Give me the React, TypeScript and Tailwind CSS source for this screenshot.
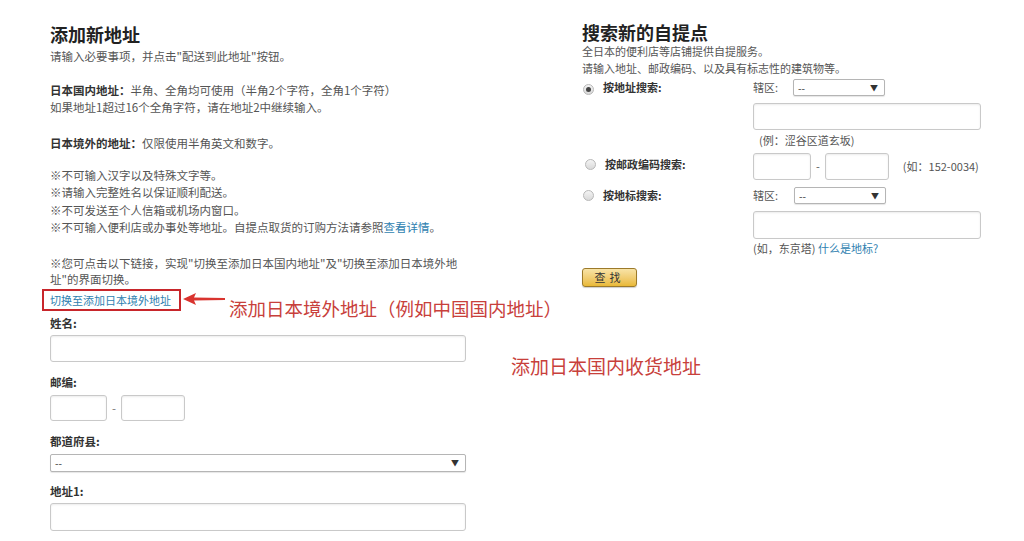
import React from "react";

const font = { fontFamily: '"Noto Sans CJK SC", "Noto Sans", sans-serif' };

function TextInput({ w }: { w: string }) {
  return (
    <div
      className={`${w} rounded-[3px] border border-[#c9c9c9] bg-white shadow-[inset_0_1px_2px_rgba(0,0,0,0.08)]`}
    />
  );
}

function Select({ w, h }: { w: string; h: string }) {
  return (
    <div
      className={`${w} ${h} flex items-center justify-between rounded-[2px] border border-[#b5b5b5] bg-white pl-[4px] pr-[6px] text-[10px] leading-none text-[#333] shadow-[0_1px_1px_rgba(0,0,0,0.1)]`}
    >
      <span>--</span>
      <span className="text-[8px]">▼</span>
    </div>
  );
}

function Radio({ checked }: { checked?: boolean }) {
  return (
    <div className="flex h-[11px] w-[11px] items-center justify-center rounded-full border border-[#b8b8b8] bg-gradient-to-b from-[#f4f4f4] to-[#d9d9d9]">
      {checked && <div className="h-[5px] w-[5px] rounded-full bg-[#444]" />}
    </div>
  );
}

export default function App() {
  return (
    <div
      style={font}
      className="relative h-[541px] w-[1024px] overflow-hidden bg-white text-[11px] text-[#555]"
    >
      <div className="flex pl-[50px]">
        {/* Left column */}
        <div className="w-[416px] pt-[22px] text-[11.5px]">
          <h1 className="text-[18px] font-bold leading-[24px] text-[#222]">添加新地址</h1>
          <p className="mt-[2px] leading-[17px]">请输入必要事项，并点击"配送到此地址"按钮。</p>
          <p className="mt-[17px] leading-[17px]">
            <span className="font-bold text-[#333]">日本国内地址：</span>半角、全角均可使用（半角2个字符，全角1个字符）
            <br />
            如果地址1超过16个全角字符，请在地址2中继续输入。
          </p>
          <p className="mt-[19px] leading-[17px]">
            <span className="font-bold text-[#333]">日本境外的地址：</span>仅限使用半角英文和数字。
          </p>
          <div className="mt-[15px] leading-[17.3px]">
            <p>※不可输入汉字以及特殊文字等。</p>
            <p>※请输入完整姓名以保证顺利配送。</p>
            <p>※不可发送至个人信箱或机场内窗口。</p>
            <p>
              ※不可输入便利店或办事处等地址。自提点取货的订购方法请参照
              <span className="text-[#2f7fb0]">查看详情</span>。
            </p>
          </div>
          <p className="mt-[19px] whitespace-nowrap leading-[16px]">
            ※您可点击以下链接，实现"切换至添加日本国内地址"及"切换至添加日本境外地
            <br />
            址"的界面切换。
          </p>
          <div className="ml-[-8px] mt-[2px] flex h-[22px] w-[139px] items-center whitespace-nowrap border-2 border-[#c8262b] pl-[6px] text-[11px] text-[#2f7fb0]">
            切换至添加日本境外地址
          </div>

          <div className="mt-[4px] font-bold leading-[17px] text-[#333]">姓名:</div>
          <TextInput w="mt-[3px] h-[27px] w-[416px]" />

          <div className="mt-[12px] font-bold leading-[17px] text-[#333]">邮编:</div>
          <div className="mt-[4px] flex items-center">
            <TextInput w="h-[26px] w-[57px]" />
            <span className="mx-[5px] text-[#777]">-</span>
            <TextInput w="h-[26px] w-[64px]" />
          </div>

          <div className="mt-[12px] font-bold leading-[17px] text-[#333]">都道府县:</div>
          <Select w="mt-[4px] w-[416px]" h="h-[18px]" />

          <div className="mt-[11px] font-bold leading-[17px] text-[#333]">地址1:</div>
          <TextInput w="mt-[3px] h-[28px] w-[416px]" />
        </div>

        {/* Right column */}
        <div className="ml-[116px] w-[420px] pt-[21px]">
          <h2 className="text-[18px] font-bold leading-[22px] text-[#222]">搜索新的自提点</h2>
          <p className="leading-[17px]">全日本的便利店等店铺提供自提服务。</p>
          <p className="leading-[17px]">请输入地址、邮政编码、以及具有标志性的建筑物等。</p>

          <div className="mt-[2px] flex">
            <div className="flex w-[171px] items-start">
              <div className="ml-[1px] mt-[5px]">
                <Radio checked />
              </div>
              <span className="ml-[9px] font-bold text-[#333]">按地址搜索:</span>
            </div>
            <div>
              <div className="flex items-center">
                <span>辖区:</span>
                <Select w="ml-[15px] w-[92px]" h="h-[17px]" />
              </div>
              <TextInput w="mt-[7px] h-[27px] w-[228px]" />
              <p className="ml-[6px] mt-[2px] leading-[17px]">(例：涩谷区道玄坂)</p>
            </div>
          </div>

          <div className="mt-[4px] flex">
            <div className="flex w-[171px] items-start pt-[3px]">
              <div className="ml-[3px] mt-[3px]">
                <Radio />
              </div>
              <span className="ml-[9px] font-bold text-[#333]">按邮政编码搜索:</span>
            </div>
            <div className="flex items-center">
              <TextInput w="h-[27px] w-[58px]" />
              <span className="mx-[5px] text-[#555]">-</span>
              <TextInput w="h-[27px] w-[64px]" />
              <span className="ml-[14px]">(如：152-0034)</span>
            </div>
          </div>

          <div className="mt-[7px] flex">
            <div className="flex w-[171px] items-start">
              <div className="ml-[1px] mt-[3px]">
                <Radio />
              </div>
              <span className="ml-[9px] font-bold text-[#333]">按地标搜索:</span>
            </div>
            <div>
              <div className="flex items-center">
                <span>辖区:</span>
                <Select w="ml-[16px] w-[92px]" h="h-[17px]" />
              </div>
              <TextInput w="mt-[7px] h-[28px] w-[228px]" />
              <p className="mt-[1px] leading-[17px]">
                (如，东京塔) <span className="text-[#2f7fb0]">什么是地标?</span>
              </p>
            </div>
          </div>

          <button className="mt-[11px] flex h-[19px] w-[55px] items-center justify-center rounded-[3px] border border-[#9c7a2a] bg-gradient-to-b from-[#f8e3a6] to-[#e9b934] text-[11px] leading-none tracking-[4px] text-[#333] shadow-[0_1px_1px_rgba(0,0,0,0.2)]">
            查找
          </button>
        </div>
      </div>

      {/* Annotations */}
      <div className="absolute left-[183px] top-[293px] flex items-center">
        <svg width="42" height="12" viewBox="0 0 42 12">
          <polygon points="0,6 13,0 11,4.5 42,5 42,7 11,7.5 13,12" fill="#d9342f" />
        </svg>
      </div>
      <div className="absolute left-[229px] top-[297px] text-[18.5px] leading-[22px] text-[#c8403b]">
        添加日本境外地址（例如中国国内地址）
      </div>
      <div className="absolute left-[511px] top-[355px] text-[19px] leading-[22px] text-[#c8403b]">
        添加日本国内收货地址
      </div>
    </div>
  );
}
